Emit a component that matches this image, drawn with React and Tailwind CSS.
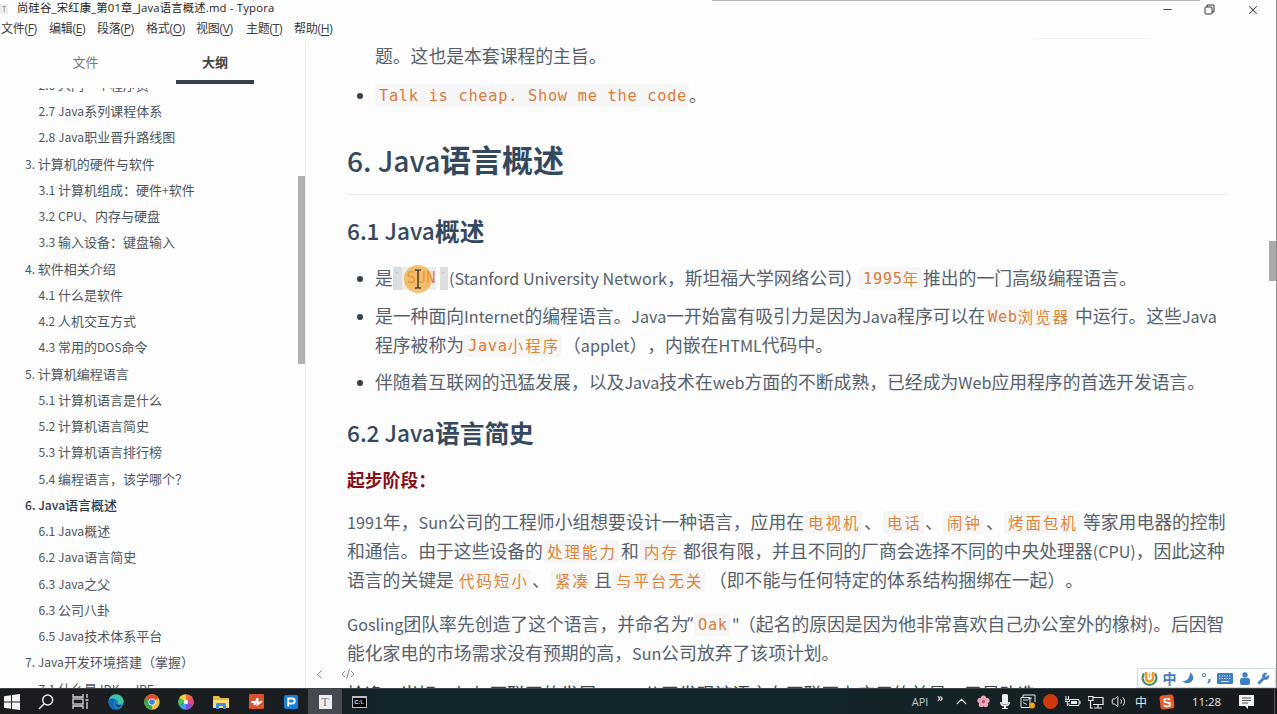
import React from "react";
import { Minus, X, Search, ChevronUp, ChevronLeft, Volume2, Wrench } from "lucide-react";

const MENUS = [
  { label: "文件", key: "F", cls: "w-12" },
  { label: "编辑", key: "E", cls: "w-12" },
  { label: "段落", key: "P", cls: "w-[49px]" },
  { label: "格式", key: "O", cls: "w-[50px]" },
  { label: "视图", key: "V", cls: "w-[50px]" },
  { label: "主题", key: "T", cls: "w-12" },
  { label: "帮助", key: "H", cls: "w-12" },
];

const OUTLINE = [
  { text: "2.6 入门一个程序员", level: 2 },
  { text: "2.7 Java系列课程体系", level: 2 },
  { text: "2.8 Java职业晋升路线图", level: 2 },
  { text: "3. 计算机的硬件与软件", level: 1 },
  { text: "3.1 计算机组成：硬件+软件", level: 2 },
  { text: "3.2 CPU、内存与硬盘", level: 2 },
  { text: "3.3 输入设备：键盘输入", level: 2 },
  { text: "4. 软件相关介绍", level: 1 },
  { text: "4.1 什么是软件", level: 2 },
  { text: "4.2 人机交互方式", level: 2 },
  { text: "4.3 常用的DOS命令", level: 2 },
  { text: "5. 计算机编程语言", level: 1 },
  { text: "5.1 计算机语言是什么", level: 2 },
  { text: "5.2 计算机语言简史", level: 2 },
  { text: "5.3 计算机语言排行榜", level: 2 },
  { text: "5.4 编程语言，该学哪个？", level: 2 },
  { text: "6. Java语言概述", level: 1, active: true },
  { text: "6.1 Java概述", level: 2 },
  { text: "6.2 Java语言简史", level: 2 },
  { text: "6.3 Java之父", level: 2 },
  { text: "6.3 公司八卦", level: 2 },
  { text: "6.5 Java技术体系平台", level: 2 },
  { text: "7. Java开发环境搭建（掌握）", level: 1 },
  { text: "7.1 什么是JDK、JRE", level: 2 },
];

// latin runs are set a bit smaller than the chinese text
const mixed = (text, cls) =>
  text.split(/([ -~]+)/).map((part, i) =>
    i % 2 ? (
      <span key={i} className={cls}>
        {part}
      </span>
    ) : (
      part
    )
  );

const Line = ({ bullet, className = "", children }) => (
  <div className={`flex h-[29px] shrink-0 items-center whitespace-pre ${className}`}>
    {bullet !== undefined && (
      <span className="flex w-7 shrink-0 pl-[10px]">
        {bullet && <i className="h-[6px] w-[6px] rounded-full bg-[#34404c]" />}
      </span>
    )}
    {children}
  </div>
);

const T = ({ className = "", children }) => (
  <span className={`-mt-[2px] shrink-0 ${className}`}>{mixed(children, "text-[0.907em]")}</span>
);

// inline code
const Code = ({ className = "", children }) => (
  <span className={`flex h-[23px] shrink-0 items-center ${className}`}>
    <code className="h-[23px] rounded-sm bg-[#f6f6f6] pl-[4px] pr-[2px] font-['Noto_Sans_CJK_SC',sans-serif] text-[15.4px] leading-[22px] tracking-[2.1px] text-[#dc8438]">
      {mixed(children, "align-[1px] font-['DejaVu_Sans_Mono',monospace] leading-none tracking-[0.67px] text-[#dc7a3c]")}
    </code>
  </span>
);

const H3 = ({ latin, children, className = "" }) => (
  <h3 className={`flex h-9 shrink-0 items-center text-[24.7px] text-[#34495e] ${className}`}>
    <span className="-mt-[2px] w-[88px] shrink-0 whitespace-nowrap text-[22.6px] font-medium">{latin}</span>
    <span className="-mt-[2px] font-bold">{children}</span>
  </h3>
);

const Slot = ({ className = "", children }) => (
  <div className={`flex h-full shrink-0 items-center justify-center ${className}`}>{children}</div>
);

const TitleBar = () => (
  <header className="flex h-[18px] shrink-0 items-center justify-between">
    <div className="flex items-center">
      <span className="flex h-[10px] w-2 items-center justify-center bg-[#eeeeee] text-[7px] leading-none text-[#777]">T</span>
      <h1 className="ml-[9px] -mt-[2px] whitespace-pre font-['Open_Sans','Noto_Sans_CJK_SC',sans-serif] text-[11.3px] tracking-[0.2px] text-[#1d1d1d]">
        尚硅谷_宋红康_第01章_Java语言概述.md - Typora
      </h1>
    </div>
    <div className="flex h-full items-start pt-px">
      <Slot className="h-3 w-[42px]">
        <Minus size={13} strokeWidth={2} color="#444" />
      </Slot>
      <Slot className="h-3 w-[43px]">
        <svg width="11" height="11" viewBox="0 0 11 11" fill="none" stroke="#333">
          <rect x="1" y="3" width="7" height="7" rx="1" />
          <path d="M3 3V1h7v7H8" />
        </svg>
      </Slot>
      <Slot className="h-3 w-[43px]">
        <X size={14} strokeWidth={1.8} color="#444" />
      </Slot>
      <span className="w-[3px]" />
    </div>
  </header>
);

const MenuBar = () => (
  <nav className="flex h-6 shrink-0 items-center pl-px font-['Open_Sans','Noto_Sans_CJK_SC',sans-serif] text-[12px] tracking-[-0.3px] text-[#3a3a3a]">
    {MENUS.map((m) => (
      <span key={m.key} className={`-mt-[2px] whitespace-nowrap ${m.cls}`}>
        {m.label}(<u className="underline-offset-2">{m.key}</u>)
      </span>
    ))}
  </nav>
);

const Sidebar = () => (
  <aside className="flex w-[306px] shrink-0 flex-col border-r border-[#ececec]">
    <div className="flex h-[42px] shrink-0 text-[13px]">
      <div className="flex w-[171px] justify-center pt-[10px] text-[#777]">文件</div>
      <div className="ml-[5px] flex w-[78px] justify-center border-b-4 border-[#33414f] pt-[10px] font-bold text-[#444]">
        大纲
      </div>
    </div>
    <div className="flex min-h-0 flex-1">
      <div className="mt-[4px] flex flex-1 flex-col overflow-hidden text-[13px] text-[#4d565f]">
        <ul className="-mt-[16.4px]">
          {OUTLINE.map((item, i) => (
            <li
              key={i}
              className={`flex h-[26.26px] items-center ${
                item.level === 1 ? "pl-[25px]" : "pl-[38.5px]"
              } ${item.active ? "font-medium text-[#2f3a45]" : ""}`}
            >
              <span className="whitespace-pre">{mixed(item.text, "text-[12.1px]")}</span>
            </li>
          ))}
        </ul>
      </div>
      <div className="w-[7px] shrink-0 pt-[92px]">
        <div className="h-[188px] bg-[#b1b1b1]" />
      </div>
    </div>
  </aside>
);

const Article = () => (
  <article className="flex h-[646px] w-[922px] flex-col overflow-hidden pl-[41px] text-[17.82px] text-[#56616d] [text-spacing-trim:space-all]">
    <Line bullet={false}>
      <T>题。这也是本套课程的主旨。</T>
    </Line>
    <Line bullet className="mt-[10px]">
      <Code className="w-[314px]">Talk is cheap. Show me the code</Code>
      <T>。</T>
    </Line>

    <h2 className="mt-7 flex h-[57px] shrink-0 items-baseline border-b border-[#e8eaec] text-[31px] leading-[41px] text-[#34495e]">
      <span className="w-[93px] shrink-0 whitespace-nowrap text-[28.2px] font-medium">6. Java</span>
      <span className="font-bold">语言概述</span>
    </h2>

    <H3 latin="6.1 Java" className="mt-[19px]">概述</H3>
    <Line bullet className="mt-[14px]">
      <T className="w-[18px]">是</T>
      <span className="relative flex h-[23px] w-14 shrink-0 items-center">
        <span className="h-[23px] w-[9px] bg-[#dedede] text-center text-[12px] leading-5 text-[#bbb]">`</span>
        <span className="flex h-[23px] w-[34px] items-center justify-end bg-[#ededed] font-['DejaVu_Sans_Mono',monospace] text-[15.4px] tracking-[0.5px] text-[#dc7d3c]">
          SUN
        </span>
        <span className="ml-[4px] h-[23px] w-[8px] bg-[#dedede] text-center text-[12px] leading-5 text-[#bbb]">`</span>
        <span className="absolute left-[11px] -top-[2px] h-[28px] w-[28px] rounded-full bg-[#f5a52a]/65" />
        <svg className="absolute left-[20px] top-[2px]" width="10" height="20" viewBox="0 0 10 20" fill="none" stroke="#4a4238" strokeWidth="1.5">
          <path d="M2 1h2l1 1 1-1h2M5 2v16M2 19h2l1-1 1 1h2" />
        </svg>
      </span>
      <T className="w-[410px]">(Stanford University Network，斯坦福大学网络公司）</T>
      <Code className="w-[64px]">1995年</Code>
      <T>推出的一门高级编程语言。</T>
    </Line>
    <Line bullet className="mt-[9px]">
      <T className="w-[609px]">是一种面向Internet的编程语言。Java一开始富有吸引力是因为Java程序可以在</T>
      <Code className="w-[91px]">Web浏览器</Code>
      <T>中运行。这些Java</T>
    </Line>
    <Line bullet={false}>
      <T className="w-[89px]">程序被称为</T>
      <Code className="w-[99px]">Java小程序</Code>
      <T>（applet），内嵌在HTML代码中。</T>
    </Line>
    <Line bullet className="mt-2">
      <T>伴随着互联网的迅猛发展，以及Java技术在web方面的不断成熟，已经成为Web应用程序的首选开发语言。</T>
    </Line>

    <H3 latin="6.2 Java" className="mt-[19px]">语言简史</H3>
    <Line className="mt-[14px] font-bold text-[#85101a]">
      <T>起步阶段：</T>
    </Line>

    <Line className="mt-[13px]">
      <T className="w-[457px]">1991年，Sun公司的工程师小组想要设计一种语言，应用在</T>
      <Code className="w-[60px]">电视机</Code>
      <T className="w-[19px]">、</T>
      <Code className="w-[42px]">电话</Code>
      <T className="w-[18px]">、</T>
      <Code className="w-[43px]">闹钟</Code>
      <T className="w-[18px]">、</T>
      <Code className="w-[79px]">烤面包机</Code>
      <T>等家用电器的控制</T>
    </Line>
    <Line>
      <T className="w-[196px]">和通信。由于这些设备的</T>
      <Code className="w-[78px]">处理能力</Code>
      <T className="w-[19px]">和</T>
      <Code className="w-[43px]">内存</Code>
      <T>都很有限，并且不同的厂商会选择不同的中央处理器(CPU)，因此这种</T>
    </Line>
    <Line>
      <T className="w-[108px]">语言的关键是</T>
      <Code className="w-[77px]">代码短小</Code>
      <T className="w-[19px]">、</T>
      <Code className="w-[43px]">紧凑</Code>
      <T className="w-[18px]">且</T>
      <Code className="w-[97px]">与平台无关</Code>
      <T>（即不能与任何特定的体系结构捆绑在一起）。</T>
    </Line>

    <Line className="mt-[15px]">
      <T className="w-[340px]">Gosling团队率先创造了这个语言，并命名为</T>
      <T className="w-[7px] font-['Open_Sans',sans-serif]">“</T>
      <Code className="w-[38px]">Oak</Code>
      <T className="w-[6px]">"</T>
      <T>（起名的原因是因为他非常喜欢自己办公室外的橡树)。后因智</T>
    </Line>
    <Line>
      <T>能化家电的市场需求没有预期的高，Sun公司放弃了该项计划。</T>
    </Line>
    <Line className="mt-[12px] text-[#3c444c]">
      <T>恰逢，当好，与与互联网的发展，Sun公司发现该语言在互联网上应用的前景，于是改造</T>
    </Line>
  </article>
);

const ImeBar = () => (
  <div className="absolute bottom-[26px] right-px flex h-5 w-[139px] items-center border border-[#c9dcec] bg-white text-[#3f7fc4]">
    <Slot className="w-[23px]">
      <svg width="17" height="17" viewBox="0 0 17 17" fill="none">
        <path d="M3 3.5a7 7 0 1 0 11 0" stroke="#3e8f66" strokeWidth="2.2" />
        <path d="M5 2v6a3.5 3.5 0 0 0 7 0V2" stroke="#ef9c28" strokeWidth="2.6" />
        <path d="M8.5 3v5" stroke="#f3bc55" strokeWidth="1.5" />
      </svg>
    </Slot>
    <Slot className="w-[17px] text-[14px] font-bold leading-none">中</Slot>
    <Slot className="w-[20px]">
      <svg width="12" height="12" viewBox="0 0 12 12" fill="#3f7fc4">
        <path d="M8 .5c3 2 4.500 5.500 2 8.500C7.500 12 3 12 .5 9c4 .5 7.500-3 7.500-8.500z" />
      </svg>
    </Slot>
    <Slot className="w-[17px]">
      <svg width="11" height="12" viewBox="0 0 11 12" fill="none" stroke="#3f7fc4">
        <circle cx="3" cy="3" r="1.700" />
        <path d="M8.500 7v2l-1.500 2" strokeWidth="2" />
      </svg>
    </Slot>
    <Slot className="w-[20px]">
      <svg width="16" height="11" viewBox="0 0 16 11">
        <rect width="16" height="11" rx="1" fill="#3f7fc4" />
        <path d="M2 3h12M2 5.500h12" stroke="#b9d3ee" strokeDasharray="1.500 1" />
        <path d="M4 8.500h8" stroke="#dce9f6" />
      </svg>
    </Slot>
    <Slot className="w-[19px]">
      <svg width="10" height="13" viewBox="0 0 10 13" fill="#3f7fc4">
        <circle cx="5" cy="3" r="2.700" />
        <path d="M0 8q0-2 2-2h6q2 0 2 2v3q0 2-2 2H2q-2 0-2-2z" />
      </svg>
    </Slot>
    <Slot className="w-[19px]">
      <Wrench size={13} fill="#3f7fc4" strokeWidth={1.5} />
    </Slot>
  </div>
);

const TaskBar = () => (
  <footer className="flex h-[26px] shrink-0 items-center justify-between border-t border-[#3b4144] bg-[linear-gradient(90deg,#1b1c1f_0%,#1a1e21_24%,#12252a_30%,#12252a_65%,#17191c_100%)] text-[#e8e8e8]">
    <div className="flex h-full items-center">
      <Slot className="w-[24px]">
        <svg width="16" height="16" viewBox="0 0 16 16" fill="#f3f3f3">
          <path d="M0 2.300 7 1.200v6.300H0zM8 1l8-1v7.500H8zM0 8.500h7v6.300l-7-1.100zM8 8.500h8V16l-8-1z" />
        </svg>
      </Slot>
      <Slot className="ml-[3px] w-[38px]">
        <svg width="16" height="16" viewBox="0 0 16 16" fill="none" stroke="#e8e8e8" strokeWidth="1.500">
          <circle cx="9.700" cy="6" r="5" />
          <path d="M6.200 9.700 1 15" />
        </svg>
      </Slot>
      <Slot className="w-[30px]">
        <svg width="17" height="15" viewBox="0 0 17 15" fill="none" stroke="#dcdcdc" strokeWidth="1.300">
          <path d="M1 0v3h10V0M1 15v-3h10v3" />
          <rect x="1" y="5" width="10" height="5" />
          <path d="M15 0v4M15 8v7M13.500 6h3" />
        </svg>
      </Slot>
      <Slot className="ml-[3px] w-[36px]">
        <svg width="16" height="16" viewBox="0 0 16 16">
          <circle cx="8" cy="8" r="7.700" fill="#1688d2" />
          <path d="M1 5.500C3-1 13-1.500 15.500 6c.8 3-1.500 5-4.500 4.500-2-.4-1-1.500-1-2.500C9.500 4.500 4 3.500 1 5.500z" fill="#3fc3a0" />
          <path d="M1 6c3-2.500 7-1 7 1-3 .5-3 5 .5 7.800C3 15.500-.5 11 1 6z" fill="#1767b5" />
          <path d="M8 7.500c-1.500 2.500 1 4.500 5.500 3.500-.8 1.200-2 2-3 2.300C8 12.500 6.500 9.500 8 7.500z" fill="#1a2430" />
        </svg>
      </Slot>
      <Slot className="w-[35px]">
        <svg width="16" height="16" viewBox="0 0 16 16">
          <circle cx="8" cy="8" r="7.700" fill="#f0c234" />
          <path d="M8 8 1.300 4.100A7.700 7.700 0 0 1 14.700 4.100z" fill="#df4937" />
          <path d="M8 8 1.300 4.100A7.700 7.700 0 0 0 8 15.700z" fill="#3ba256" />
          <circle cx="8" cy="8" r="3.600" fill="#fff" />
          <circle cx="8" cy="8" r="2.800" fill="#3f7ee0" />
        </svg>
      </Slot>
      <Slot className="w-[34px]">
        <svg width="16" height="16" viewBox="0 0 16 16">
          <path d="M8 8V.3A7.700 7.700 0 0 1 14.700 4z" fill="#f16b3a" />
          <path d="M8 8l6.700-4a7.700 7.700 0 0 1 0 8z" fill="#e9458c" />
          <path d="M8 8l6.700 4A7.700 7.700 0 0 1 8 15.700z" fill="#7b55dc" />
          <path d="M8 8v7.700A7.700 7.700 0 0 1 1.300 12z" fill="#35a9e8" />
          <path d="M8 8l-6.700 4a7.700 7.700 0 0 1 0-8z" fill="#42c65a" />
          <path d="M8 8 1.300 4A7.700 7.700 0 0 1 8 .3z" fill="#f3d338" />
          <circle cx="8" cy="8" r="2.200" fill="#fff" />
        </svg>
      </Slot>
      <Slot className="w-[36px]">
        <svg width="16" height="14" viewBox="0 0 16 14">
          <path d="M0 1h6l1.500 2H16v10H0z" fill="#e9b83f" />
          <path d="M0 5h16v8H0z" fill="#f9dc7b" />
          <path d="M3 14V9q0-1 1-1h8q1 0 1 1v5h-3v-3H6v3z" fill="#3e92d3" />
        </svg>
      </Slot>
      <Slot className="w-[34px]">
        <svg width="15" height="15" viewBox="0 0 15 15">
          <rect width="15" height="15" rx="1" fill="#d9532c" />
          <path d="M2 8h3.500v3L8.500 4v6.500L13 7" stroke="#fff" strokeWidth="1.900" fill="none" />
        </svg>
      </Slot>
      <Slot className="w-[35px]">
        <svg width="14" height="14" viewBox="0 0 14 14">
          <rect width="14" height="14" rx="2" fill="#157fe0" />
          <path d="M4.200 11.500V3.500h4a2.300 2.300 0 0 1 0 5H4.500" stroke="#fff" strokeWidth="1.900" fill="none" />
        </svg>
      </Slot>
      <Slot className="w-[34px] bg-[#454b50]">
        <span className="flex h-[14px] w-[13px] items-center justify-center bg-[#eeeeee] font-['Liberation_Serif',serif] text-[12px] leading-none text-[#777]">
          T
        </span>
      </Slot>
      <Slot className="w-[34px]">
        <span className="flex h-[12px] w-[15px] items-center justify-center border border-t-2 border-[#b9bdbf] bg-black font-['Liberation_Sans',sans-serif] text-[6px] font-bold leading-none">
          C:\.
        </span>
      </Slot>
    </div>

    <div className="flex h-full items-center">
      <Slot className="w-[20px] font-['Open_Sans',sans-serif] text-[11px] leading-none text-[#c5cbcd]">API</Slot>
      <Slot className="w-[20px] pb-[10px] text-[12px] font-bold leading-none">»</Slot>
      <Slot className="w-[22px]">
        <ChevronUp size={17} strokeWidth={1.900} />
      </Slot>
      <Slot className="w-[22px]">
        <svg width="13" height="13" viewBox="0 0 13 13" fill="#eda5ba">
          <circle cx="6.500" cy="3" r="2.600" />
          <circle cx="3" cy="5.500" r="2.600" />
          <circle cx="10" cy="5.500" r="2.600" />
          <circle cx="4.400" cy="9.500" r="2.600" />
          <circle cx="8.600" cy="9.500" r="2.600" />
          <circle cx="6.500" cy="6.600" r="1.600" fill="#c44f74" />
        </svg>
      </Slot>
      <Slot className="w-[22px]">
        <svg width="10" height="15" viewBox="0 0 10 15" fill="#f0f0f0">
          <rect x="2" y="0" width="6" height="10.500" rx="1.500" />
          <path d="M0 8h1.500q0 3 3.500 3t3.500-3H10q0 4-4 4.500V14h2v1H2v-1h2v-1.500Q0 12 0 8z" />
        </svg>
      </Slot>
      <Slot className="w-[24px]">
        <svg width="16" height="15" viewBox="0 0 16 15" fill="none" stroke="#e8e8e8">
          <path d="M3 3V1h12v7M1 3.500h9v10H1z" />
          <path d="M3 6h5M3 8.500l4 2M8 5l4-1" />
          <circle cx="12" cy="11.500" r="3" fill="#f1a11c" stroke="none" />
        </svg>
      </Slot>
      <Slot className="w-[21px]">
        <span className="h-[15px] w-[15px] rounded-full bg-[#cf3a0c]" />
      </Slot>
      <Slot className="w-[24px]">
        <svg width="16" height="11" viewBox="0 0 16 11" fill="none" stroke="#ececec">
          <path d="M5 3.500h9v6H4V7" />
          <rect x="6" y="5" width="6" height="3" fill="#ececec" stroke="none" />
          <path d="M15 5v3M1 0v3M3.500 0v3M0 3.500h4.500v2h-4.500zM2.300 5v5" />
        </svg>
      </Slot>
      <Slot className="w-[22px]">
        <svg width="16" height="14" viewBox="0 0 16 14" fill="none" stroke="#ececec" strokeWidth="1.200">
          <path d="M5 2.500h10v7H5M10 9.500V13M6 13h8" />
          <path d="M0 1.500h5v4H0zM2.500 5.500V13H5" />
        </svg>
      </Slot>
      <Slot className="w-[22px]">
        <Volume2 size={15} strokeWidth={1.600} />
      </Slot>
      <Slot className="w-[24px] text-[12px] leading-none">中</Slot>
      <Slot className="w-[28px]">
        <span className="flex h-[14px] w-[14px] -rotate-6 items-center justify-center rounded-[3px] bg-[#e95a27] font-['Liberation_Sans',sans-serif] text-[13px] font-bold leading-none text-white">
          S
        </span>
      </Slot>
      <Slot className="w-[51px] font-['Open_Sans',sans-serif] text-[11.500px] leading-none tracking-[-0.1px]">11:28</Slot>
      <Slot className="w-[28px]">
        <svg width="15" height="14" viewBox="0 0 15 14">
          <path d="M0 0h15v11H9v3l-3-3H0z" fill="#f1f1f1" />
          <path d="M3 3h9M3 5.500h9M3 8h6" stroke="#555" />
        </svg>
      </Slot>
      <span className="ml-[14px] mr-[2px] h-full w-px bg-[#555b5e]" />
    </div>
  </footer>
);

export default function App() {
  return (
    <div className="relative flex h-[714px] w-[1277px] flex-col overflow-hidden bg-[#fdfdfd] font-['Noto_Sans_CJK_SC',sans-serif]">
      <div className="absolute left-[712px] top-0 h-px w-[488px] bg-[#b8b8b8]" />
      <div className="absolute left-[1033px] top-[38px] h-px w-[115px] bg-[#f3f3f3]" />
      <TitleBar />
      <MenuBar />
      <div className="flex h-[646px] shrink-0">
        <Sidebar />
        <Article />
        <div className="ml-auto w-2 shrink-0 pt-[199px]">
          <div className="h-10 bg-[#aaaaaa]" />
        </div>
      </div>
      <TaskBar />
      <div className="absolute right-0 top-0 h-[688px] w-px bg-[#8d8d8d]" />
      <div className="absolute left-[306px] top-[664px] flex h-5 w-[60px] items-center text-[#777]">
        <ChevronLeft size={15} strokeWidth={1.500} className="ml-[6px]" />
        <svg className="ml-[14px]" width="14" height="10" viewBox="0 0 14 10" fill="none" stroke="#888">
          <path d="M4 2 1 5l3 3M10 2l3 3-3 3M8.500 0l-3 10" />
        </svg>
      </div>
      <ImeBar />
    </div>
  );
}
